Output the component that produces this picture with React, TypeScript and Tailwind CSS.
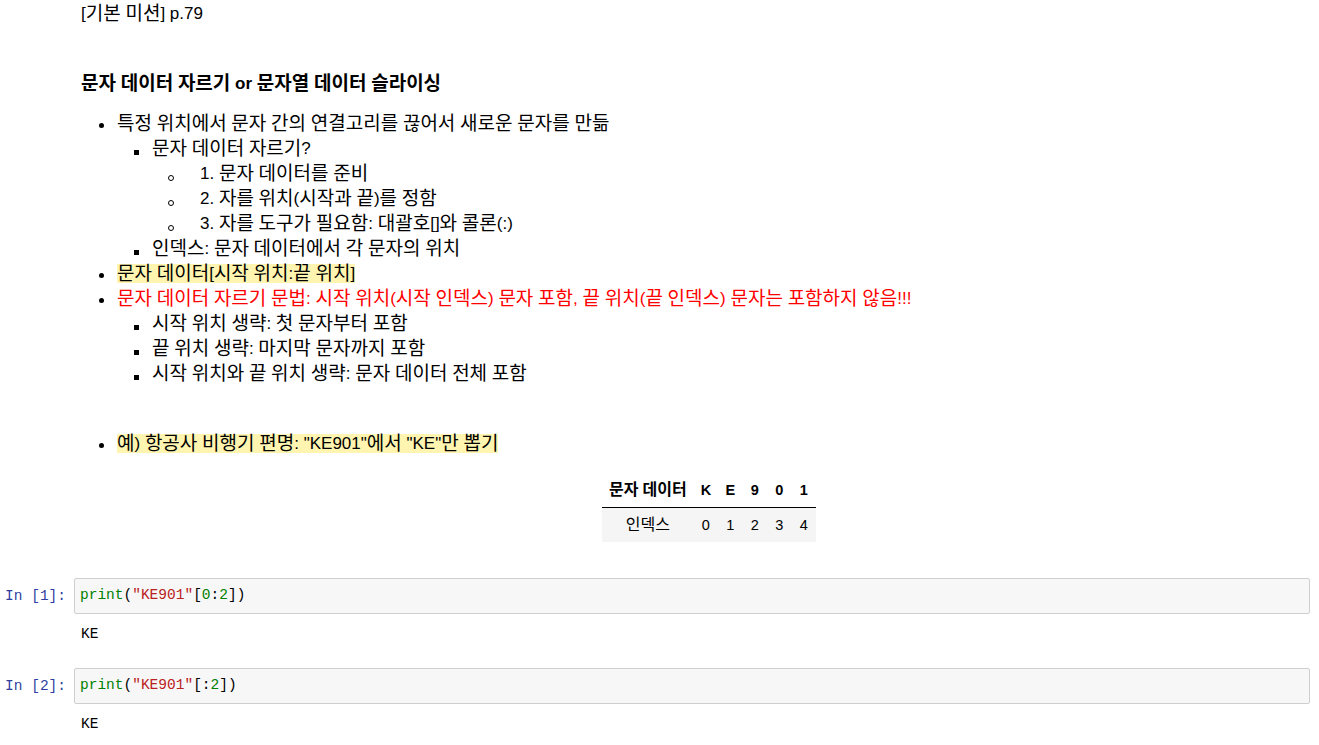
import type { ReactNode } from 'react'

const sans = { fontFamily: '"Liberation Sans", "Noto Sans CJK KR", sans-serif' }
const mono = { fontFamily: '"Liberation Mono", "Noto Sans CJK KR", monospace' }

// Hangul runs render a bit larger than the Latin text in the reference
function ko(s: string, size = 'text-[19px] leading-none align-[-1px]') {
  return s.split(/([\uAC00-\uD7A3\u3131-\u318E]+)/).map((part, i) =>
    i % 2 === 1 ? (
      <span key={i} className={size}>
        {part}
      </span>
    ) : (
      part
    )
  )
}

function Disc({ children }: { children: ReactNode }) {
  return (
    <div className="flex">
      <div className="w-[18px] shrink-0 pt-[12px]">
        <div className="w-[5px] h-[5px] rounded-full bg-black" />
      </div>
      <div>{children}</div>
    </div>
  )
}

function Square({ children }: { children: ReactNode }) {
  return (
    <div className="flex ml-[35px]">
      <div className="w-[18px] shrink-0 pt-[14px]">
        <div className="w-[5px] h-[5px] bg-black" />
      </div>
      <div>{children}</div>
    </div>
  )
}

function Circle({ children }: { children: ReactNode }) {
  return (
    <div className="flex ml-[69px]">
      <div className="w-[32px] shrink-0 pt-[14px]">
        <div className="w-[6px] h-[6px] rounded-full border border-black" />
      </div>
      <div>{children}</div>
    </div>
  )
}

const mark = 'bg-[#fff5b1]'

function CodeCell({ n, children, out }: { n: number; children: ReactNode; out: string }) {
  return (
    <div style={mono} className="text-[14.5px]">
      <div className="flex">
        <div className="w-[74px] shrink-0 text-right pr-[8px] h-[36px] leading-[36px] text-[#303f9f]">
          In [{n}]:
        </div>
        <div className="flex-1 mr-[9px] h-[36px] border border-[#cfcfcf] bg-[#f7f7f7] rounded-[2px] px-[5px] flex items-center text-black whitespace-pre">
          {children}
        </div>
      </div>
      <div className="pl-[81px] mt-[11px] leading-[18px] text-black">{out}</div>
    </div>
  )
}

export default function App() {
  const cols = ['K', 'E', '9', '0', '1']
  const idx = ['0', '1', '2', '3', '4']
  return (
    <div className="w-[1319px] h-[745px] overflow-hidden bg-white text-black" style={sans}>
      <div className="pl-[81px] pt-[1px] text-[17px] leading-[25px]">
        <p>{ko('[기본 미션] p.79')}</p>

        <p className="mt-[45px] font-bold">{ko('문자 데이터 자르기 or 문자열 데이터 슬라이싱')}</p>

        <div className="mt-[15px] ml-[18px]">
          <Disc>{ko('특정 위치에서 문자 간의 연결고리를 끊어서 새로운 문자를 만듦')}</Disc>
          <Square>{ko('문자 데이터 자르기?')}</Square>
          <Circle>{ko('1. 문자 데이터를 준비')}</Circle>
          <Circle>{ko('2. 자를 위치(시작과 끝)를 정함')}</Circle>
          <Circle>{ko('3. 자를 도구가 필요함: 대괄호[]와 콜론(:)')}</Circle>
          <Square>{ko('인덱스: 문자 데이터에서 각 문자의 위치')}</Square>
          <Disc>
            <span className={mark}>{ko('문자 데이터[시작 위치:끝 위치]')}</span>
          </Disc>
          <Disc>
            <span className="text-[#ff0000]">
              {ko('문자 데이터 자르기 문법: 시작 위치(시작 인덱스) 문자 포함, 끝 위치(끝 인덱스) 문자는 포함하지 않음!!!')}
            </span>
          </Disc>
          <Square>{ko('시작 위치 생략: 첫 문자부터 포함')}</Square>
          <Square>{ko('끝 위치 생략: 마지막 문자까지 포함')}</Square>
          <Square>{ko('시작 위치와 끝 위치 생략: 문자 데이터 전체 포함')}</Square>

          <div className="mt-[45px]">
            <Disc>
              <span className={mark}>{ko('예) 항공사 비행기 편명: "KE901"에서 "KE"만 뽑기')}</span>
            </Disc>
          </div>
        </div>

        <table className="mt-[17px] ml-[521px] border-collapse text-[14.5px] leading-[18px]">
          <thead>
            <tr className="border-b border-black">
              <th className="px-[7px] py-[8px] text-center font-bold">
                {ko('문자 데이터', 'text-[16px] leading-none')}
              </th>
              {cols.map((c, i) => (
                <th key={i} className="w-[24.5px] py-[8px] text-center font-bold">
                  {c}
                </th>
              ))}
            </tr>
          </thead>
          <tbody>
            <tr className="bg-[#f5f5f5]">
              <td className="px-[7px] py-[8px] text-center">{ko('인덱스', 'text-[16px] leading-none')}</td>
              {idx.map((c, i) => (
                <td key={i} className="py-[8px] text-center">
                  {c}
                </td>
              ))}
            </tr>
          </tbody>
        </table>
      </div>

      <div className="mt-[36px]">
        <CodeCell n={1} out="KE">
          <span className="text-[#008000]">print</span>(
          <span className="text-[#ba2121]">"KE901"</span>[<span className="text-[#008000]">0</span>:
          <span className="text-[#008000]">2</span>])
        </CodeCell>
        <div className="mt-[25px]">
          <CodeCell n={2} out="KE">
            <span className="text-[#008000]">print</span>(
            <span className="text-[#ba2121]">"KE901"</span>[:<span className="text-[#008000]">2</span>])
          </CodeCell>
        </div>
      </div>
    </div>
  )
}
